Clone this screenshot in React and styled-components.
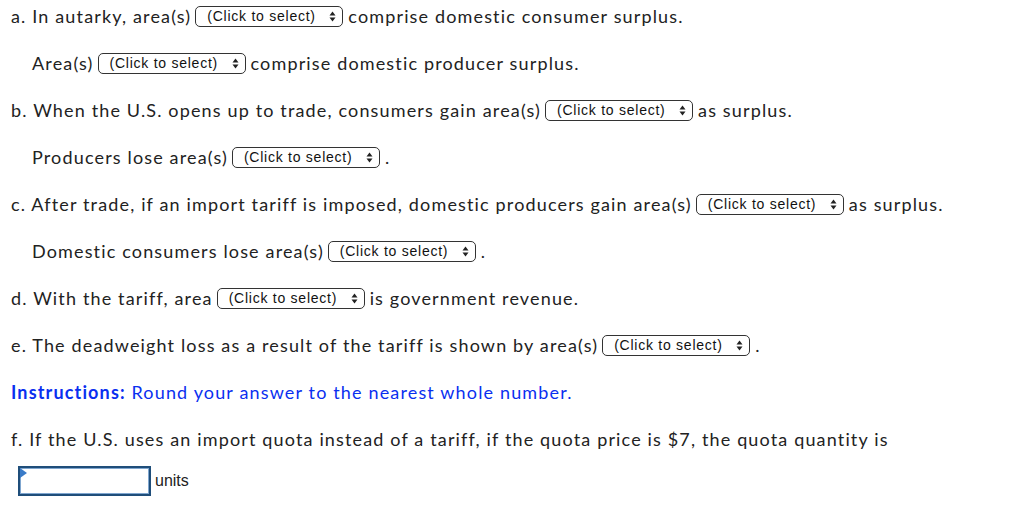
import React from 'react';
import styled, { createGlobalStyle } from 'styled-components';

const GlobalStyle = createGlobalStyle`
  body {
    margin: 0;
    background: #fff;
    font-family: Lato, "Open Sans", sans-serif;
    color: #222;
  }
`;

const Page = styled.div`
  padding: 2px 0 0 11px;
  display: flex;
  flex-direction: column;
`;

const Line = styled.div`
  height: 47px;
  display: flex;
  align-items: flex-start;
  padding-left: ${(p) => (p.indent ? '21px' : '0')};
  font-size: 18px;
  letter-spacing: 1.15px;
  line-height: 28px;
  white-space: pre;
  color: ${(p) => (p.blue ? '#0a2ff0' : '#222')};
`;

const Bold = styled.b`
  font-weight: 700;
`;

const SelectBox = styled.span`
  display: inline-flex;
  align-items: center;
  justify-content: space-between;
  box-sizing: border-box;
  width: 148px;
  height: 21px;
  margin: 4px 5px 0 4px;
  padding: 0 6px 0 11px;
  border: 1px solid #333;
  border-radius: 5px;
  background: #fff;
  font-family: "Liberation Sans", Arial, sans-serif;
  font-size: 14px;
  letter-spacing: 0.75px;
  line-height: 19px;
  color: #111;
`;

const Arrows = styled.svg`
  width: 7px;
  height: 11px;
`;

const AnswerRow = styled.div`
  display: flex;
  align-items: center;
  padding-left: 7px;
  margin-top: -6px;
`;

const Input = styled.div`
  position: relative;
  box-sizing: border-box;
  width: 133px;
  height: 30px;
  border: 2px solid #1f4e7a;
  box-shadow: inset 0 0 0 1px #7fa6cf;
  background: #fff;
`;

const Flag = styled.span`
  position: absolute;
  left: 0;
  top: 0;
  width: 0;
  height: 0;
  border-top: 5px solid transparent;
  border-bottom: 5px solid transparent;
  border-left: 7px solid #3a7bc8;
`;

const Units = styled.span`
  margin-left: 4px;
  font-family: "Liberation Sans", Arial, sans-serif;
  font-size: 16px;
  color: #222;
`;

const Select = () => (
  <SelectBox>
    <span>(Click to select)</span>
    <Arrows viewBox="0 0 7 11">
      <path d="M3.5 0.5 L6.5 4.5 L0.5 4.5 Z" fill="#222" />
      <path d="M3.5 10.5 L6.5 6.5 L0.5 6.5 Z" fill="#222" />
    </Arrows>
  </SelectBox>
);

export default function App() {
  return (
    <Page>
      <GlobalStyle />
      <Line>a. In autarky, area(s)<Select />comprise domestic consumer surplus.</Line>
      <Line indent>Area(s)<Select />comprise domestic producer surplus.</Line>
      <Line>b. When the U.S. opens up to trade, consumers gain area(s)<Select />as surplus.</Line>
      <Line indent>Producers lose area(s)<Select />.</Line>
      <Line>c. After trade, if an import tariff is imposed, domestic producers gain area(s)<Select />as surplus.</Line>
      <Line indent>Domestic consumers lose area(s)<Select />.</Line>
      <Line>d. With the tariff, area<Select />is government revenue.</Line>
      <Line>e. The deadweight loss as a result of the tariff is shown by area(s)<Select />.</Line>
      <Line blue><Bold>Instructions:</Bold> Round your answer to the nearest whole number.</Line>
      <Line>f. If the U.S. uses an import quota instead of a tariff, if the quota price is $7, the quota quantity is</Line>
      <AnswerRow>
        <Input><Flag /></Input>
        <Units>units</Units>
      </AnswerRow>
    </Page>
  );
}
